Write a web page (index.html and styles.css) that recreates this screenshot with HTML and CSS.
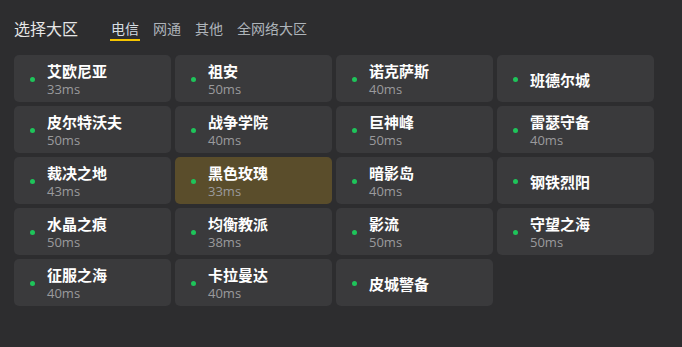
FILE: index.html
```html
<!DOCTYPE html>
<html>
	<head>
		<meta charset="utf-8">
		<title>选择大区</title>
		<link rel="stylesheet" href="styles.css">
	</head>
	<body>
		<div class="panel">
			<div class="head">
				<span class="caption">选择大区</span>
				<ul class="tabs">
					<li class="on">电信</li>
					<li>网通</li>
					<li>其他</li>
					<li>全网络大区</li>
				</ul>
			</div>
			<ul class="servers">
				<li><i></i><div><b>艾欧尼亚</b><span>33ms</span></div></li>
				<li><i></i><div><b>祖安</b><span>50ms</span></div></li>
				<li><i></i><div><b>诺克萨斯</b><span>40ms</span></div></li>
				<li><i></i><div><b>班德尔城</b></div></li>
				<li><i></i><div><b>皮尔特沃夫</b><span>50ms</span></div></li>
				<li><i></i><div><b>战争学院</b><span>40ms</span></div></li>
				<li><i></i><div><b>巨神峰</b><span>50ms</span></div></li>
				<li><i></i><div><b>雷瑟守备</b><span>40ms</span></div></li>
				<li><i></i><div><b>裁决之地</b><span>43ms</span></div></li>
				<li class="on"><i></i><div><b>黑色玫瑰</b><span>33ms</span></div></li>
				<li><i></i><div><b>暗影岛</b><span>40ms</span></div></li>
				<li><i></i><div><b>钢铁烈阳</b></div></li>
				<li><i></i><div><b>水晶之痕</b><span>50ms</span></div></li>
				<li><i></i><div><b>均衡教派</b><span>38ms</span></div></li>
				<li><i></i><div><b>影流</b><span>50ms</span></div></li>
				<li><i></i><div><b>守望之海</b><span>50ms</span></div></li>
				<li><i></i><div><b>征服之海</b><span>40ms</span></div></li>
				<li><i></i><div><b>卡拉曼达</b><span>40ms</span></div></li>
				<li><i></i><div><b>皮城警备</b></div></li>
			</ul>
		</div>
	</body>
</html>
```

FILE: styles.css
```css
* {margin: 0;padding: 0;list-style: none;box-sizing: border-box;}
html,body {width: 100%;height: 100%;}
body {background: #2d2d2f;font-family: "Noto Sans CJK SC", "Noto Sans", sans-serif;color: #fff;}
.panel {padding: 16px 14px 0;}
.head {display: flex;align-items: center;height: 23px;}
.caption {font-size: 16px;line-height: 22px;color: #e6e6e6;}
.tabs {display: flex;gap: 14px;margin-left: 33px;}
.tabs li {position: relative;font-size: 14px;line-height: 22px;color: #aeb4ba;}
.tabs li.on {color: #d6dce2;}
.tabs li.on:after {content: "";position: absolute;left: -1px;right: -1px;bottom: -2px;height: 2px;background: #f5c400;}
.servers {display: grid;grid-template-columns: repeat(4, 157px);grid-auto-rows: 47px;gap: 4px;margin-top: 16px;}
.servers li {display: flex;align-items: center;padding-left: 16px;border-radius: 5px;background: #3a3a3c;}
.servers li.on {background: #5a4d2b;}
.servers i {width: 5px;height: 5px;border-radius: 50%;background: #1ec45a;margin-right: 12px;margin-top: 1px;}
.servers div {display: flex;flex-direction: column;padding-top: 2px;}
.servers b {font-size: 15px;line-height: 20px;font-weight: bold;color: #fff;}
.servers span {font-size: 13px;line-height: 17px;color: #9a9a9c;font-family: "Open Sans", "Noto Sans", sans-serif;}
```
